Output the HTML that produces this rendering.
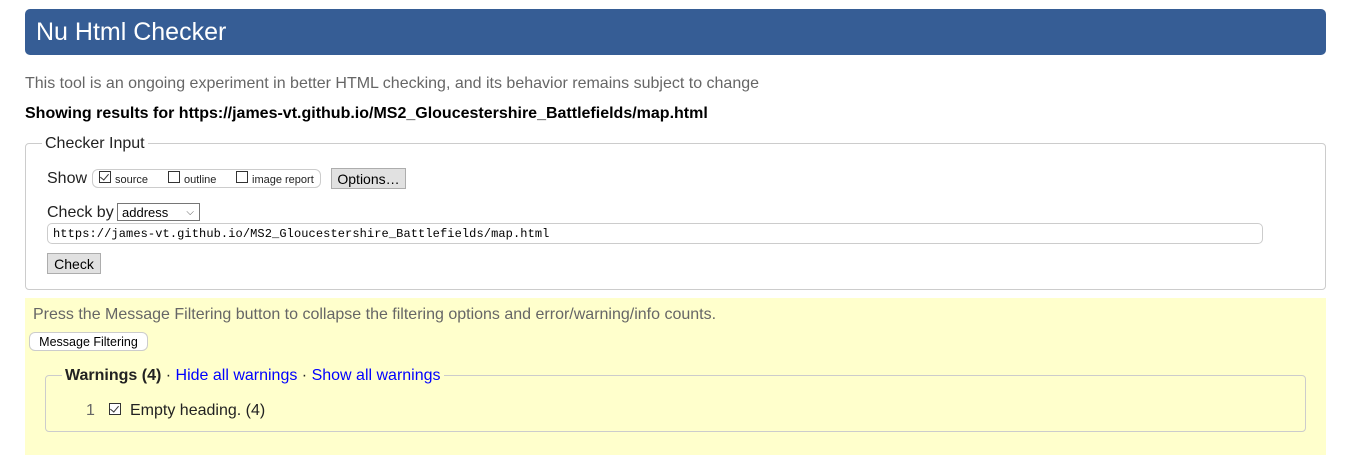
<!DOCTYPE html>
<html><head><style>
body{margin:0;width:1358px;height:472px;background:#fff;font-family:"Liberation Sans",Arial,sans-serif;position:relative;overflow:hidden}
.a{position:absolute;white-space:nowrap}
.cb{position:absolute;width:11px;height:11px;border:1px solid #333;background:#fff;box-sizing:border-box}
.ck::after{content:"";position:absolute;left:2px;top:0px;width:4px;height:7px;border:solid #333;border-width:0 1.3px 1.3px 0;transform:rotate(40deg)}
.btn{position:absolute;background:#e1e1e1;border:1px solid #adadad;box-sizing:border-box;font-size:14px;text-align:center;color:#000}
</style></head><body>
<div class="a" style="left:25px;top:9px;width:1301px;height:46px;background:#365d95;border-radius:5px"></div>
<div class="a" style="left:36px;top:18px;font-size:25px;color:#fff">Nu Html Checker</div>
<div class="a" style="left:25px;top:75px;font-size:16px;color:#666">This tool is an ongoing experiment in better HTML checking, and its behavior remains subject to change</div>
<div class="a" style="left:25px;top:105px;font-size:16px;font-weight:bold;color:#000">Showing results for https://james-vt.github.io/MS2_Gloucestershire_Battlefields/map.html</div>
<div class="a" style="left:25px;top:143px;width:1301px;height:147px;border:1px solid #ccc;border-radius:4px;box-sizing:border-box"></div>
<div class="a" style="left:42px;top:135px;font-size:16px;color:#222;background:#fff;padding:0 3px">Checker Input</div>
<div class="a" style="left:47px;top:170px;font-size:16px;color:#222">Show</div>
<div class="a" style="left:92px;top:169px;width:229px;height:19px;border:1px solid #ccc;border-radius:6px;box-sizing:border-box"></div>
<div class="cb ck" style="left:99px;top:171px;width:12px;height:12px"></div>
<div class="a" style="left:115px;top:174px;font-size:11px;color:#222">source</div>
<div class="cb" style="left:168px;top:171px;width:12px;height:12px"></div>
<div class="a" style="left:184px;top:174px;font-size:11px;color:#222">outline</div>
<div class="cb" style="left:236px;top:171px;width:12px;height:12px"></div>
<div class="a" style="left:252px;top:174px;font-size:11px;color:#222">image report</div>
<div class="btn" style="left:331px;top:168px;width:75px;height:21px;line-height:20px">Options…</div>
<div class="a" style="left:47px;top:204px;font-size:16px;color:#222">Check by</div>
<div class="a" style="left:117px;top:203px;width:83px;height:18px;border:1px solid #767676;box-sizing:border-box;font-size:13px;line-height:17px;padding-left:4px;color:#000">address<span style="position:absolute;right:5px;top:0;font-size:10px;color:#555">⌵</span></div>
<div class="a" style="left:47px;top:223px;width:1216px;height:21px;border:1px solid #ccc;border-radius:5px;box-sizing:border-box;font-family:'Liberation Mono',monospace;font-size:12px;letter-spacing:0.1px;line-height:21px;padding-left:5px;color:#000">https://james-vt.github.io/MS2_Gloucestershire_Battlefields/map.html</div>
<div class="btn" style="left:47px;top:253px;width:54px;height:21px;line-height:20px">Check</div>
<div class="a" style="left:25px;top:298px;width:1301px;height:157px;background:#ffffcc"></div>
<div class="a" style="left:33px;top:306px;font-size:16px;color:#666">Press the Message Filtering button to collapse the filtering options and error/warning/info counts.</div>
<div class="a" style="left:29px;top:332px;width:119px;height:19px;background:#fff;border:1px solid #ccc;border-radius:6px;box-sizing:border-box;font-size:12.5px;line-height:18px;text-align:center;color:#000">Message Filtering</div>
<div class="a" style="left:45px;top:375px;width:1261px;height:57px;border:1px solid #ccc;border-radius:4px;box-sizing:border-box"></div>
<div class="a" style="left:62px;top:367px;font-size:16px;color:#222;background:#ffffcc;padding:0 3px"><b>Warnings (4)</b> · <span style="color:#00f">Hide all warnings</span> · <span style="color:#00f">Show all warnings</span></div>
<div class="a" style="left:86px;top:402px;font-size:16px;color:#666">1</div>
<div class="cb ck" style="left:109px;top:403px;width:12px;height:12px"></div>
<div class="a" style="left:130px;top:402px;font-size:16px;color:#222">Empty heading. (4)</div>
</body></html>
